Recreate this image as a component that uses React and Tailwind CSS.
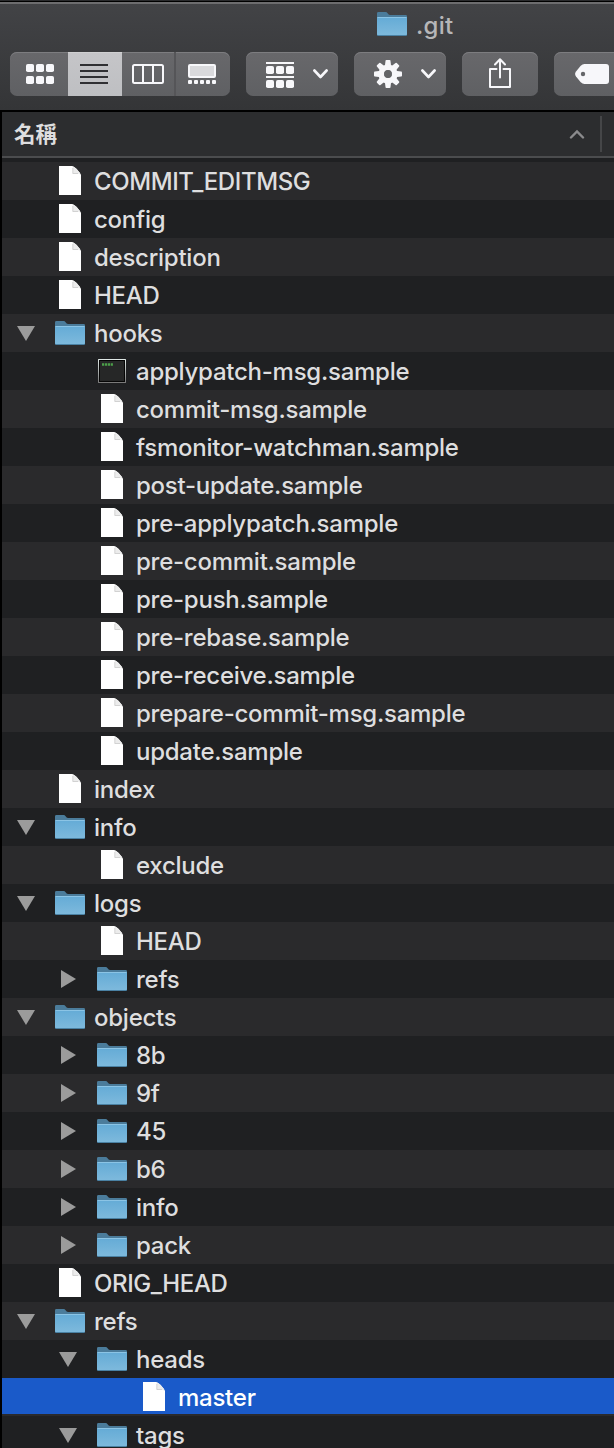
import React from "react";

const rows = [
  [0, "file", "COMMIT_EDITMSG"],
  [0, "file", "config"],
  [0, "file", "description"],
  [0, "file", "HEAD"],
  [0, "folder", "hooks", "open"],
  [1, "exec", "applypatch-msg.sample"],
  [1, "file", "commit-msg.sample"],
  [1, "file", "fsmonitor-watchman.sample"],
  [1, "file", "post-update.sample"],
  [1, "file", "pre-applypatch.sample"],
  [1, "file", "pre-commit.sample"],
  [1, "file", "pre-push.sample"],
  [1, "file", "pre-rebase.sample"],
  [1, "file", "pre-receive.sample"],
  [1, "file", "prepare-commit-msg.sample"],
  [1, "file", "update.sample"],
  [0, "file", "index"],
  [0, "folder", "info", "open"],
  [1, "file", "exclude"],
  [0, "folder", "logs", "open"],
  [1, "file", "HEAD"],
  [1, "folder", "refs", "closed"],
  [0, "folder", "objects", "open"],
  [1, "folder", "8b", "closed"],
  [1, "folder", "9f", "closed"],
  [1, "folder", "45", "closed"],
  [1, "folder", "b6", "closed"],
  [1, "folder", "info", "closed"],
  [1, "folder", "pack", "closed"],
  [0, "file", "ORIG_HEAD"],
  [0, "folder", "refs", "open"],
  [1, "folder", "heads", "open"],
  [2, "file", "master"],
  [1, "folder", "tags", "open"],
];

const indents = ["pl-[15px]", "pl-[57px]", "pl-[99px]"];

function Folder() {
  return (
    <svg width="30" height="24" viewBox="0 0 30 24" className="shrink-0">
      <defs>
        <linearGradient id="folderFront" x1="0" y1="0" x2="0" y2="1">
          <stop offset="0" stopColor="#64abd6" />
          <stop offset="1" stopColor="#7db9dc" />
        </linearGradient>
      </defs>
      <path d="M0 23V1.400Q0 0 1.400 0H8.600Q9.800 0 10.600 1.300Q11.500 3 13 3H28.800Q30 3 30 4.200V23Z" fill="#4b7c9b" />
      <rect x="0" y="5" width="30" height="19" rx="1" fill="#4a81a3" />
      <rect x="0" y="5" width="30" height="18" rx="0.8" fill="url(#folderFront)" />
      <rect x="0.5" y="5" width="29" height="1" fill="#8bc4e5" />
    </svg>
  );
}

function FileIcon() {
  return (
    <svg width="30" height="30" viewBox="0 0 30 30" className="shrink-0">
      <path d="M4 0H17C20 1 24.5 5.500 26 9V29H4Z" fill="#fff" />
      <path d="M17 0C18.500 2 18 5 17.800 7.500C21 7.200 24 7.500 26 9C24.500 5.500 20 1 17 0Z" fill="#ececec" />
      <path d="M17.800 2V7.500H23" fill="none" stroke="#c9c9c9" strokeWidth="0.8" />
    </svg>
  );
}

function ExecIcon() {
  return (
    <svg width="30" height="24" viewBox="0 0 30 24" className="shrink-0">
      <defs>
        <linearGradient id="execEdge" x1="0" y1="0" x2="0" y2="1">
          <stop offset="0" stopColor="#e1eae8" />
          <stop offset="1" stopColor="#777" />
        </linearGradient>
      </defs>
      <rect x="1" y="0" width="28" height="24" rx="0.5" fill="url(#execEdge)" />
      <rect x="2" y="1" width="26" height="22" fill="#050505" />
      <rect x="3" y="2" width="24" height="20" fill="#262727" />
      <path d="M5 5.500H16" stroke="#4ca04a" strokeWidth="2.400" strokeDasharray="2.200 0.700" />
    </svg>
  );
}

function Disclosure({ state }) {
  return (
    <svg width="18" height="18" viewBox="0 0 18 18" className="shrink-0">
      {state === "open" && <path d="M0 2H18L9 17Z" fill="#9b9b9b" />}
      {state === "closed" && <path d="M2 0L17 9L2 18Z" fill="#9b9b9b" />}
    </svg>
  );
}

function Row({ depth, kind, name, state, index }) {
  const selected = name === "master";
  const bg = index % 2 === 0 ? "bg-[#2a2a2c]" : "bg-[#1f2022]";
  const tracking = name.includes("_") ? "tracking-[-0.4px]" : "tracking-[-0.25px]";
  return (
    <div className={`h-[38px] shrink-0 ${bg}`}>
      <div className={`flex items-center ${indents[depth]} ${selected ? "h-9 bg-[#1a5ac9] text-white" : "h-[38px]"}`}>
        <Disclosure state={state} />
        <span className={`ml-5 flex w-[30px] ${selected ? "pt-[2px]" : ""}`}>
          {kind === "folder" ? <Folder /> : kind === "exec" ? <ExecIcon /> : <FileIcon />}
        </span>
        <span className={`ml-[9px] whitespace-nowrap ${tracking} ${selected ? "pt-1" : "pt-[2px]"}`}>{name}</span>
      </div>
    </div>
  );
}

function Button({ className, children }) {
  return (
    <div className={`flex h-11 shrink-0 items-center rounded-[7px] bg-linear-to-b from-[#68686b] to-[#5f6063] shadow-[inset_0_1px_0_#7d7d80] ${className}`}>
      {children}
    </div>
  );
}

function Chevron() {
  return (
    <svg width="15" height="10" viewBox="0 0 15 10" className="shrink-0">
      <path d="M1.400 1.500L7.500 8L13.600 1.500" fill="none" stroke="#f7f7fa" strokeWidth="2.600" strokeLinecap="round" strokeLinejoin="round" />
    </svg>
  );
}

function Squares({ y }) {
  return [0, 10, 20].map((x) => <rect key={x} x={x} y={y} width="8" height="8" rx="1.800" />);
}

function Toolbar() {
  return (
    <div className="flex h-11 items-center overflow-hidden pl-[10px]">
      <Button className="w-[220px] overflow-hidden">
        <div className="flex w-[58px] justify-center pl-[2px]">
          <svg width="28" height="20" fill="#f7f7fa">
            <Squares y={0} />
            <Squares y={12} />
          </svg>
        </div>
        <div className="flex h-11 w-[54px] items-center justify-center border-t border-[#d0d0d2] bg-linear-to-b from-[#c5c5c8] to-[#bebfc2] pr-[2px]">
          <svg width="28" height="20" fill="#303033" className="-mt-px">
            <path d="M0 0H28V2H0ZM0 6H28V8H0ZM0 12H28V14H0ZM0 18H28V20H0Z" />
          </svg>
        </div>
        <div className="flex h-11 w-[54px] items-center justify-center border-r-2 border-[#555558]">
          <svg width="32" height="20" fill="none" stroke="#f7f7fa" strokeWidth="2">
            <rect x="1" y="1" width="30" height="18" rx="1.500" />
            <path d="M11 1V19M21 1V19" />
          </svg>
        </div>
        <div className="flex w-[54px] justify-center pr-[2px]">
          <svg width="28" height="20" fill="#f7f7fa">
            <rect width="28" height="14" rx="2" />
            <rect x="2" y="2" width="24" height="10" fill="#d9d9dc" />
            {[0, 6, 12, 18, 24].map((x) => (
              <rect key={x} x={x} y="16" width="4" height="4" rx="1" />
            ))}
          </svg>
        </div>
      </Button>
      <Button className="ml-4 w-[92px] pl-5">
        <svg width="28" height="26" fill="#f7f7fa" className="mt-[2px]">
          <rect width="28" height="2" />
          <Squares y={4} />
          <rect y="14" width="28" height="2" />
          <Squares y={18} />
        </svg>
        <div className="ml-[19px]"><Chevron /></div>
      </Button>
      <Button className="ml-4 w-[92px] pl-5">
        <svg width="28" height="28" viewBox="-14 -14 28 28" fill="#f7f7fa">
          {[0, 45, 90, 135, 180, 225, 270, 315].map((angle) => (
            <path key={angle} d="M-3.200 -7L-2.500 -13.200Q-2.400 -14 -1.600 -14H1.600Q2.400 -14 2.500 -13.200L3.200 -7Z" transform={`rotate(${angle})`} />
          ))}
          <circle r="6.700" fill="none" stroke="#f7f7fa" strokeWidth="5.800" />
          <circle r="3.900" fill="#636467" />
        </svg>
        <div className="ml-[19px]"><Chevron /></div>
      </Button>
      <Button className="ml-4 w-[76px] justify-center">
        <svg width="22" height="30" fill="none" stroke="#f7f7fa" strokeWidth="2" className="-mt-[2px]" strokeLinecap="round" strokeLinejoin="round">
          <path d="M7.500 11H1V29H21V11H14.500M11 19.500V1.500M6 6.500L11 1.300L16 6.500" />
        </svg>
      </Button>
      <Button className="ml-4 w-[92px] pl-[21px]">
        <svg width="34" height="20" viewBox="0 0 34 20">
          <path d="M9.500 0H31Q34 0 34 3V17Q34 20 31 20H9.500Q7.500 20 5.500 18L1 12.500Q-0.800 10 1 7.500L5.500 2Q7.500 0 9.500 0Z" fill="#f7f7fa" />
          <circle cx="8" cy="10" r="2.200" fill="#656669" />
        </svg>
      </Button>
    </div>
  );
}

export default function App() {
  return (
    <div className="flex h-[1448px] w-[614px] flex-col overflow-hidden bg-black font-['Inter','Noto_Sans_CJK_TC',sans-serif] text-[24px] font-[450] leading-[30px] text-[#dededf]">
      <header className="flex h-[111px] shrink-0 flex-col border-t border-[#292a2c]">
        <div className="h-px shrink-0 bg-black" />
        <div className="h-[108px] shrink-0 border-t-2 border-[#6d6d6f] bg-linear-to-b from-[#424346] to-[#343537]">
          <div className="flex h-12 items-start pt-2 pl-[377px]">
            <Folder />
            <span className="-mt-px ml-[9px] tracking-[0.3px] text-[#b6b6b8]">.git</span>
          </div>
          <Toolbar />
        </div>
      </header>
      <main className="flex grow flex-col pl-[2px]">
        <div className="mt-px flex h-[46px] shrink-0 items-center border-b-2 border-[#4b4c4e] bg-[#2c2d2f] pl-3">
          <span className="text-[21.500px] font-bold">名稱</span>
          <svg width="16" height="10" viewBox="0 0 16 10" className="mr-[15px] ml-auto">
            <path d="M2 8.500L8 2.500L14 8.500" fill="none" stroke="#8b8b8d" strokeWidth="2.400" strokeLinecap="round" />
          </svg>
          <div className="mr-3 h-9 w-[2px] bg-[#454648]" />
        </div>
        <div className="h-1 shrink-0 bg-[#1f2022]" />
        {rows.map(([depth, kind, name, state], i) => (
          <Row key={i} index={i} depth={depth} kind={kind} name={name} state={state} />
        ))}
      </main>
    </div>
  );
}
